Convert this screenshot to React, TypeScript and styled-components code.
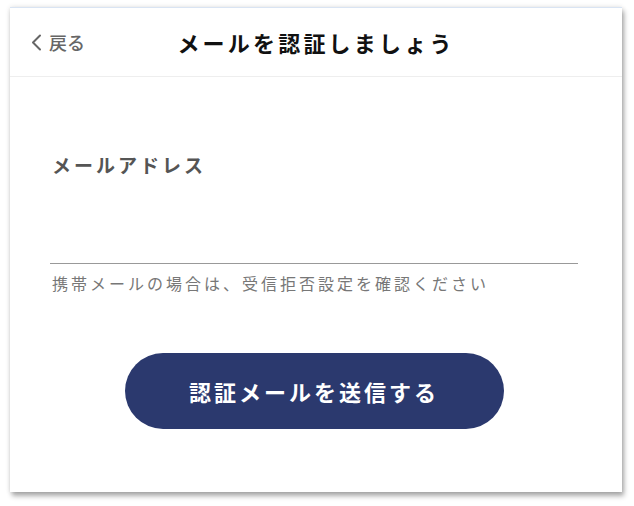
import React from 'react';
import styled, { createGlobalStyle } from 'styled-components';

const GlobalStyle = createGlobalStyle`
  html, body {
    margin: 0;
    padding: 0;
    background: #ffffff;
  }
  body {
    font-family: "Noto Sans CJK JP", "Noto Sans", sans-serif;
  }
`;

const Page = styled.div`
  width: 634px;
  height: 506px;
  padding: 7px 12px 0 10px;
  box-sizing: border-box;
`;

const Card = styled.div`
  width: 612px;
  height: 485px;
  background: #ffffff;
  border-top: 1px solid #d9e4f3;
  box-sizing: border-box;
  box-shadow: 0 0 5px rgba(0, 0, 0, 0.12), 2px 4px 5px rgba(0, 0, 0, 0.32);
  display: flex;
  flex-direction: column;
`;

const Header = styled.header`
  height: 68px;
  border-bottom: 1px solid #eeeeee;
  display: grid;
  grid-template-columns: 1fr auto 1fr;
  align-items: center;
  padding: 0 21px;
`;

const BackButton = styled.button`
  display: flex;
  align-items: center;
  gap: 7px;
  background: none;
  border: none;
  padding: 0;
  color: #666666;
  font-family: inherit;
  font-size: 18px;
  font-weight: 500;
  justify-self: start;
  cursor: pointer;
`;

const Title = styled.h1`
  margin: 0;
  font-size: 22px;
  font-weight: 700;
  letter-spacing: 3.2px;
  color: #111111;
`;

const Body = styled.main`
  display: flex;
  flex-direction: column;
  padding: 74px 44px 0 40px;
`;

const Label = styled.label`
  font-size: 19px;
  font-weight: 700;
  color: #555555;
  letter-spacing: 3px;
  padding-left: 2px;
  line-height: 28px;
`;

const Input = styled.input`
  margin-top: 54px;
  height: 30px;
  border: none;
  border-bottom: 1px solid #999999;
  outline: none;
  font-family: inherit;
  font-size: 16px;
  padding: 0 2px;
`;

const Help = styled.p`
  margin: 8px 0 0;
  padding-left: 2px;
  font-size: 16px;
  color: #777777;
  letter-spacing: 3px;
  line-height: 22px;
`;

const SubmitButton = styled.button`
  align-self: center;
  margin-top: 59px;
  width: 379px;
  height: 76px;
  border: none;
  border-radius: 38px;
  background: #2b396e;
  color: #ffffff;
  font-family: inherit;
  font-size: 22px;
  font-weight: 700;
  letter-spacing: 3px;
  cursor: pointer;
`;

const ChevronLeft = () => (
  <svg width="11" height="17" viewBox="0 0 11 17" fill="none">
    <path d="M9 1.5 L2 8.5 L9 15.5" stroke="#666666" strokeWidth="2" strokeLinecap="round" strokeLinejoin="round" />
  </svg>
);

const App: React.FC = () => {
  return (
    <Page>
      <GlobalStyle />
      <Card>
        <Header>
          <BackButton>
            <ChevronLeft />
            戻る
          </BackButton>
          <Title>メールを認証しましょう</Title>
          <span />
        </Header>
        <Body>
          <Label htmlFor="email">メールアドレス</Label>
          <Input id="email" type="email" />
          <Help>携帯メールの場合は、受信拒否設定を確認ください</Help>
          <SubmitButton>認証メールを送信する</SubmitButton>
        </Body>
      </Card>
    </Page>
  );
};

export default App;
